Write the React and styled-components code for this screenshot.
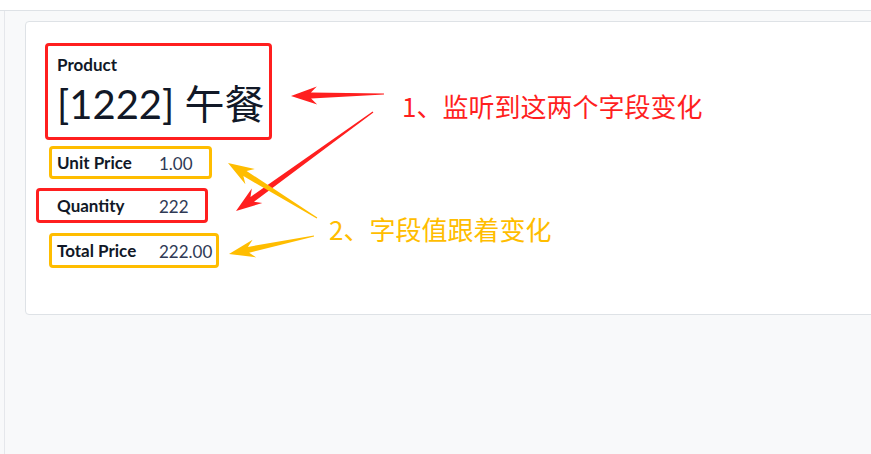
import styled, { createGlobalStyle } from "styled-components";

const GlobalStyle = createGlobalStyle`
  html, body {
    margin: 0;
    padding: 0;
    background: #f8f9fa;
  }
  body {
    font-family: Lato, "Noto Sans", "Noto Sans CJK SC", sans-serif;
    color: #212529;
  }
`;

const RED = "#ff1f1f";
const AMBER = "#ffbd00";

const Page = styled.div`
  position: relative;
  width: 871px;
  height: 454px;
  overflow: hidden;
  background: #f8f9fa;
`;

const TopBar = styled.div`
  height: 10px;
  background: #ffffff;
  border-bottom: 1px solid #dee2e6;
`;

const Main = styled.div`
  display: flex;
  height: 443px;
`;

const SideEdge = styled.div`
  width: 4px;
  border-right: 1px solid #e5e7eb;
  background: #f8f9fa;
`;

const Content = styled.div`
  flex: 1;
  padding: 10px 0 0 20px;
`;

const Sheet = styled.div`
  height: 294px;
  box-sizing: border-box;
  margin-right: -10px;
  background: #ffffff;
  border: 1px solid #dee2e6;
  border-radius: 4px;
  padding: 21px 0 0 19px;
  display: flex;
  flex-direction: column;
  align-items: flex-start;
`;

/* annotation frame drawn round a block of the form */
const Frame = styled.div`
  box-sizing: border-box;
  border: 3px solid ${(p) => p.$color};
  border-radius: 4px;
  width: ${(p) => p.$w}px;
  height: ${(p) => p.$h}px;
  margin-left: ${(p) => p.$shift || 0}px;
  margin-top: ${(p) => p.$gap || 0}px;
`;

const TitleFrame = styled(Frame)`
  padding: 8px 0 0 9px;
`;

const TitleLabel = styled.div`
  font-size: 17px;
  font-weight: 700;
  line-height: 22px;
  color: #111827;
`;

const TitleValue = styled.div`
  font-size: 40px;
  line-height: 48px;
  margin-top: 4px;
  white-space: nowrap;
  color: #111827;
  font-family: Lato, "Noto Sans CJK SC", sans-serif;
`;

const FieldFrame = styled(Frame)`
  display: flex;
  align-items: center;
  padding-left: ${(p) => p.$pad}px;
`;

const FieldLabel = styled.div`
  width: 102px;
  font-size: 17px;
  font-weight: 700;
  line-height: 22px;
  color: #111827;
`;

const FieldValue = styled.div`
  font-size: 17px;
  line-height: 22px;
  color: #2f3a55;
  padding-top: 3px;
`;

const Overlay = styled.svg`
  position: absolute;
  left: 0;
  top: 0;
  pointer-events: none;
`;

const Note = styled.text`
  font-family: "Noto Sans CJK SC", "Noto Sans", sans-serif;
  font-size: 26px;
`;

function arrowPoints([tx, ty], [px, py], head = 26, half = 9, tail = 0.6, neck = 3) {
  const len = Math.hypot(px - tx, py - ty);
  const dx = (px - tx) / len;
  const dy = (py - ty) / len;
  const nx = -dy;
  const ny = dx;
  const bx = px - dx * head;
  const by = py - dy * head;
  const ix = bx + dx * 6;
  const iy = by + dy * 6;
  const pts = [
    [tx + nx * tail, ty + ny * tail],
    [ix + nx * neck, iy + ny * neck],
    [bx + nx * half, by + ny * half],
    [px, py],
    [bx - nx * half, by - ny * half],
    [ix - nx * neck, iy - ny * neck],
    [tx - nx * tail, ty - ny * tail],
  ];
  return pts.map((p) => p.map((v) => v.toFixed(1)).join(",")).join(" ");
}

const arrows = [
  { from: [384, 94], to: [291, 96], color: RED },
  { from: [373, 112], to: [236, 211], color: RED },
  { from: [317, 218], to: [228, 163], color: AMBER },
  { from: [314, 236], to: [229, 254], color: AMBER },
];

const fields = [
  { label: "Unit Price", value: "1.00", color: AMBER, w: 163, h: 33, shift: 4, pad: 5, gap: 6 },
  { label: "Quantity", value: "222", color: RED, w: 172, h: 35, shift: -9, pad: 18, gap: 9 },
  { label: "Total Price", value: "222.00", color: AMBER, w: 170, h: 35, shift: 4, pad: 5, gap: 10 },
];

export default function App() {
  return (
    <>
      <GlobalStyle />
      <Page>
        <TopBar />
        <Main>
          <SideEdge />
          <Content>
            <Sheet>
              <TitleFrame $color={RED} $w={227} $h={97}>
                <TitleLabel>Product</TitleLabel>
                <TitleValue>[1222] 午餐</TitleValue>
              </TitleFrame>
              {fields.map((f) => (
                <FieldFrame
                  key={f.label}
                  $color={f.color}
                  $w={f.w}
                  $h={f.h}
                  $shift={f.shift}
                  $pad={f.pad}
                  $gap={f.gap}
                >
                  <FieldLabel>{f.label}</FieldLabel>
                  <FieldValue>{f.value}</FieldValue>
                </FieldFrame>
              ))}
            </Sheet>
          </Content>
        </Main>

        <Overlay width="871" height="454">
          {arrows.map((a, i) => (
            <polygon key={i} points={arrowPoints(a.from, a.to)} fill={a.color} />
          ))}
          <Note x="402" y="117" fill={RED}>
            1、监听到这两个字段变化
          </Note>
          <Note x="329" y="240" fill={AMBER}>
            2、字段值跟着变化
          </Note>
        </Overlay>
      </Page>
    </>
  );
}
